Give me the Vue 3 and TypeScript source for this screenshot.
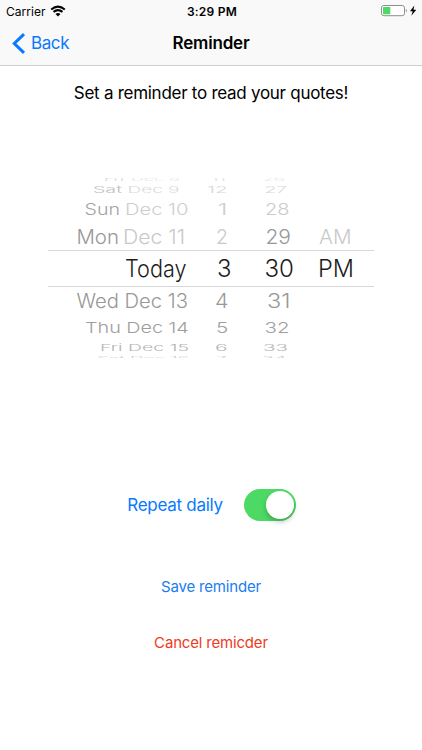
<script setup lang="ts">
import { ref } from 'vue'

interface Glyphs {
  text: string
  from: number
  to: number
  color: string
}

interface WheelRow {
  baseline: number
  cap: number
  items: Glyphs[]
}

const FONT_SIZE = 22
const CAP_HEIGHT = FONT_SIZE * 0.727

const g = (text: string, from: number, to: number, color: string): Glyphs => ({ text, from, to, color })

/* Rows of the drum, squashed vertically as they turn away from the centre. */
const rows: WheelRow[] = [
  { baseline: 3, cap: 4, items: [g('Fri', 104, 124, '#d8d8d8'), g('Dec 8', 131, 180, '#e6e6e6'), g('11', 211, 226, '#e2e2e2'), g('26', 263, 285, '#e6e6e6')] },
  { baseline: 14.8, cap: 6.8, items: [g('Sat', 93, 122, '#bebebe'), g('Dec 9', 127.5, 179.5, '#dadada'), g('12', 207, 227.5, '#d8d8d8'), g('27', 264.5, 287, '#d8d8d8')] },
  { baseline: 36.9, cap: 11.6, items: [g('Sun', 84.5, 120, '#a3a3a3'), g('Dec 10', 125, 188.5, '#cecece'), g('1', 217.5, 227.5, '#cecece'), g('28', 265, 289.5, '#cbcbcb')] },
  { baseline: 65.6, cap: 14.4, items: [g('Mon', 76.5, 119, '#989898'), g('Dec 11', 123, 185, '#c9c9c9'), g('2', 216, 228, '#c9c9c9'), g('29', 265.5, 291, '#989898'), g('AM', 319, 351.5, '#c9c9c9')] },
  { baseline: 98.8, cap: 17.3, items: [g('Today', 125, 186.5, '#1c1c1c'), g('3', 217, 231.5, '#1c1c1c'), g('30', 264.5, 294, '#1c1c1c'), g('PM', 318, 354, '#1c1c1c')] },
  { baseline: 129.5, cap: 14.2, items: [g('Wed Dec 13', 76.5, 188, '#989898'), g('4', 215, 228.5, '#989898'), g('31', 267, 290.5, '#989898')] },
  { baseline: 155.4, cap: 11, items: [g('Thu Dec 14', 85, 188.8, '#9e9e9e'), g('5', 216, 228.3, '#9e9e9e'), g('32', 264.5, 289.5, '#9e9e9e')] },
  { baseline: 173, cap: 6.8, items: [g('Fri Dec 15', 100, 189, '#b4b4b4'), g('6', 215, 227.5, '#b4b4b4'), g('33', 263, 288, '#b4b4b4')] },
  { baseline: 181.6, cap: 3.8, items: [g('Sat Dec 16', 97, 189, '#cccccc'), g('7', 216, 227, '#cccccc'), g('34', 262, 286.5, '#cccccc')] },
]

const repeatDaily = ref(true)
</script>

<template>
  <main class="screen">
    <header class="top">
      <div class="status">
        <div class="carrier">
          <span class="carrier-name">Carrier</span>
          <svg class="wifi" width="16" height="12" viewBox="0 0 16 12">
            <path d="M1.2 4.4Q8 -1.2 14.8 4.4" />
            <path d="M3.5 6.9Q8 3.3 12.5 6.9" />
            <path class="wifi-dot" d="M5.5 8.9Q8 6.9 10.5 8.9L8 11.4Z" />
          </svg>
        </div>
        <span class="clock">3:29 PM</span>
        <svg class="battery" width="38" height="14" viewBox="0 0 38 14">
          <rect x="1.5" y="1.5" width="23" height="10.2" rx="2.4" fill="#fff" stroke="#8e8e8e" />
          <rect x="3" y="3" width="7.3" height="7.2" rx="0.6" fill="#4cd964" />
          <path d="M25.9 4.8q2 1.8 0 3.6z" fill="#8e8e8e" />
          <path d="M34.3 1.6L30 7.3h2.7L31.3 11.8L36.3 5.7h-2.8z" fill="#000" />
        </svg>
      </div>
      <nav class="nav">
        <button class="back" type="button">
          <svg width="14" height="23" viewBox="0 0 14 23">
            <path d="M12 2.1L2.3 11.5L12 20.9" />
          </svg>
          <span>Back</span>
        </button>
        <h1>Reminder</h1>
        <span></span>
      </nav>
    </header>

    <p class="intro">Set a reminder to read your quotes!</p>

    <svg class="wheel" width="422" height="180" viewBox="0 0 422 180">
      <rect x="48" y="72" width="326" height="1" fill="#d8d8d8" />
      <rect x="48" y="108" width="326" height="1" fill="#d8d8d8" />
      <g
        v-for="row in rows"
        :key="row.baseline"
        :transform="`translate(0 ${row.baseline}) scale(1 ${row.cap / CAP_HEIGHT})`"
      >
        <text
          v-for="item in row.items"
          :key="item.text"
          :x="item.from"
          y="0"
          :font-size="FONT_SIZE"
          :fill="item.color"
          :textLength="item.to - item.from"
          lengthAdjust="spacingAndGlyphs"
        >{{ item.text }}</text>
      </g>
    </svg>

    <section class="repeat">
      <span class="repeat-label">Repeat daily</span>
      <button
        class="switch"
        :class="{ on: repeatDaily }"
        type="button"
        role="switch"
        :aria-checked="repeatDaily"
        @click="repeatDaily = !repeatDaily"
      >
        <span class="knob"></span>
      </button>
    </section>

    <button class="action save" type="button">Save reminder</button>
    <button class="action cancel" type="button">Cancel remicder</button>
  </main>
</template>

<style>
body {
  background: #fff;
}
</style>

<style scoped>
.screen {
  width: 422px;
  height: 750px;
  overflow: hidden;
  display: flex;
  flex-direction: column;
  align-items: center;
  background: #fff;
  color: #000;
  font-family: Inter, "Liberation Sans", sans-serif;
}
button {
  border: 0;
  padding: 0;
  background: none;
  font-family: inherit;
  cursor: pointer;
}
.top {
  box-sizing: border-box;
  width: 100%;
  height: 66px;
  background: #f9f9f9;
  border-bottom: 1px solid #cfcfcf;
}
.status,
.nav {
  display: grid;
  grid-template-columns: 1fr auto 1fr;
  align-items: center;
}
.status {
  height: 22px;
  padding: 0 4px 0 6px;
}
.carrier {
  display: flex;
  align-items: center;
  gap: 4px;
  font-size: 12px;
  letter-spacing: 0.04px;
}
.wifi {
  fill: none;
  stroke: #000;
  stroke-width: 2;
}
.wifi .wifi-dot {
  fill: #000;
  stroke: none;
}
.clock {
  font-size: 12px;
  font-weight: 600;
  letter-spacing: 0.25px;
}
.battery {
  justify-self: end;
}
.nav {
  height: 42px;
  padding: 0 12px;
}
.back {
  display: flex;
  align-items: center;
  gap: 5px;
  color: #087aff;
  font-size: 17px;
  letter-spacing: -0.4px;
}
.back path {
  fill: none;
  stroke: #087aff;
  stroke-width: 3;
}
h1 {
  margin: 0;
  font-size: 17px;
  line-height: 22px;
  font-weight: 600;
  letter-spacing: -0.2px;
}
.intro {
  margin: 16px 0 0;
  font-size: 17px;
  line-height: 22px;
  letter-spacing: -0.27px;
  white-space: nowrap;
}
.wheel {
  display: block;
  flex: none;
  margin-top: 74px;
  overflow: hidden;
  font-weight: 300;
}
.repeat {
  display: flex;
  align-items: center;
  gap: 21px;
  height: 32px;
  margin-top: 131px;
  padding-left: 1px;
}
.repeat-label {
  color: #087aff;
  font-size: 17px;
  letter-spacing: -0.28px;
}
.switch {
  display: flex;
  width: 52px;
  height: 32px;
  padding: 2px;
  border-radius: 16px;
  background: #e5e5ea;
}
.switch.on {
  justify-content: flex-end;
  background: #4cd964;
}
.knob {
  width: 28px;
  height: 28px;
  border-radius: 50%;
  background: #fff;
  box-shadow: 0 3px 5px rgba(0, 0, 0, 0.22);
}
.action {
  height: 20px;
  font-size: 15px;
  line-height: 20px;
  letter-spacing: -0.18px;
}
.save {
  margin-top: 56px;
  color: #1a7df0;
}
.cancel {
  margin-top: 36px;
  color: #ee3b22;
}
</style>
